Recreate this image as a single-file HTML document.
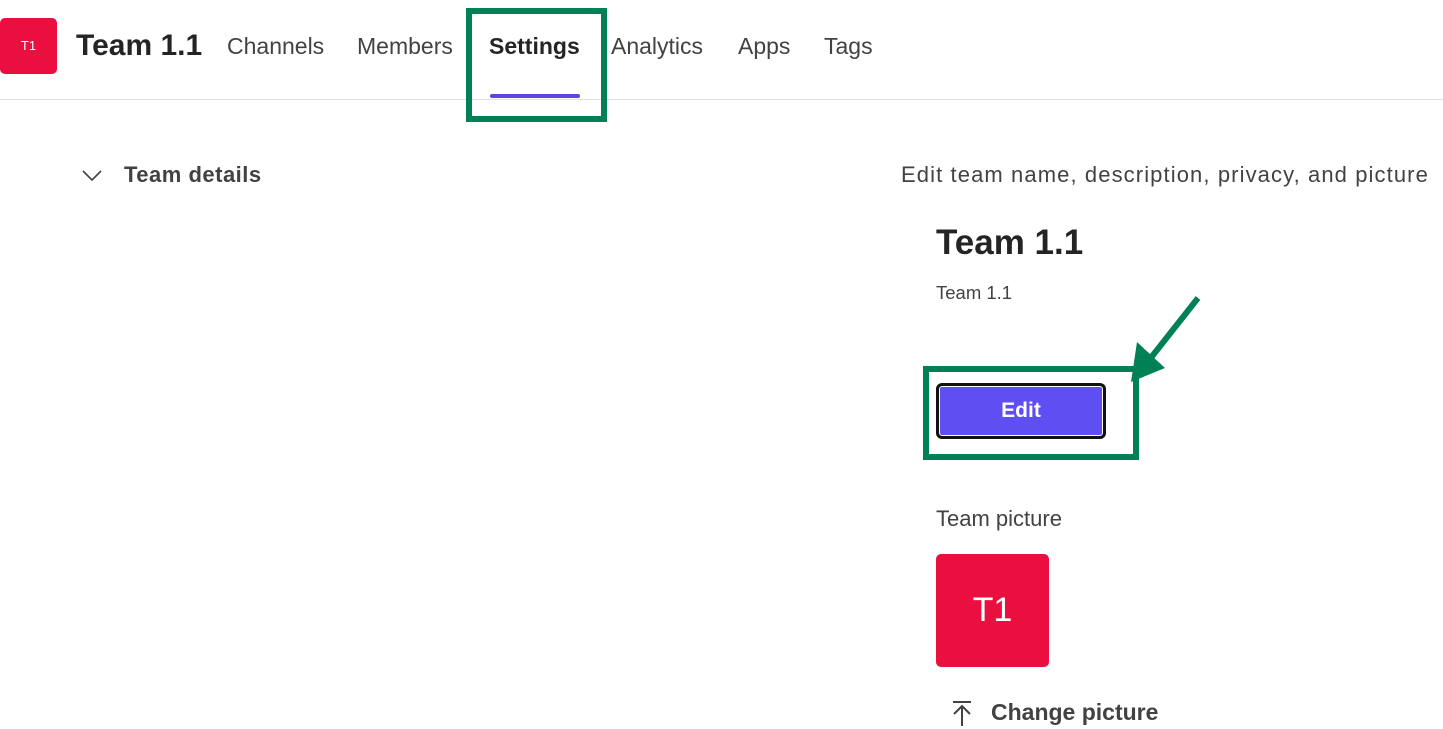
<!DOCTYPE html>
<html><head><style>
body{margin:0;width:1443px;height:729px;background:#fff;position:relative;overflow:hidden;font-family:"Liberation Sans",sans-serif;color:#242424}
.a{position:absolute;white-space:nowrap}
.tab{position:absolute;top:33px;font-size:23px;color:#424242}
</style></head><body>
<div class="a" style="left:0;top:18px;width:57px;height:56px;background:#eb0f3f;border-radius:5px;color:#fff;font-size:13px;line-height:56px;text-align:center">T1</div>
<div class="a" style="left:76px;top:29px;font-size:30px;font-weight:bold;color:#242424">Team 1.1</div>
<div class="tab" style="left:227px">Channels</div>
<div class="tab" style="left:357px">Members</div>
<div class="tab" style="left:489px;font-weight:bold;color:#242424">Settings</div>
<div class="tab" style="left:611px">Analytics</div>
<div class="tab" style="left:738px">Apps</div>
<div class="tab" style="left:824px">Tags</div>
<div class="a" style="left:490px;top:94px;width:90px;height:4px;background:#5b47e0;border-radius:2px"></div>
<div class="a" style="left:0;top:99px;width:1443px;height:1px;background:#e0e0e0"></div>
<div class="a" style="left:466px;top:8px;width:129px;height:102px;border:6px solid #008055"></div>

<svg class="a" style="left:80px;top:166px" width="24" height="20"><path d="M3 5 L12 14 L21 5" fill="none" stroke="#424242" stroke-width="1.6"/></svg>
<div class="a" style="left:124px;top:162px;font-size:22px;letter-spacing:0.5px;font-weight:bold;color:#424242">Team details</div>
<div class="a" style="left:901px;top:162px;font-size:22px;letter-spacing:1.1px;color:#424242">Edit team name, description, privacy, and picture</div>
<div class="a" style="left:936px;top:223px;font-size:35px;font-weight:bold">Team 1.1</div>
<div class="a" style="left:936px;top:282px;font-size:18.5px;color:#424242">Team 1.1</div>

<div class="a" style="left:936px;top:383px;width:164px;height:50px;background:#5f4ff3;border:3px solid #111;border-radius:6px;box-shadow:inset 0 0 0 1px #fff;color:#fff;font-weight:bold;font-size:21px;line-height:50px;text-align:center">Edit</div>
<div class="a" style="left:923px;top:366px;width:204px;height:82px;border:6px solid #008055"></div>
<svg class="a" style="left:1120px;top:290px" width="90" height="100"><line x1="78" y1="8" x2="26" y2="74" stroke="#008055" stroke-width="6"/><polygon points="11,92 17,52 45,78" fill="#008055"/></svg>

<div class="a" style="left:936px;top:506px;font-size:22px;color:#424242">Team picture</div>
<div class="a" style="left:936px;top:554px;width:113px;height:113px;background:#eb0f3f;border-radius:5px;color:#fff;font-size:34px;line-height:113px;text-align:center">T1</div>
<svg class="a" style="left:950px;top:700px" width="24" height="28"><path d="M3 2 H21 M12 6 V26 M4 14 L12 6 L20 14" fill="none" stroke="#424242" stroke-width="2"/></svg>
<div class="a" style="left:991px;top:699px;font-size:23px;font-weight:bold;color:#424242">Change picture</div>
</body></html>
